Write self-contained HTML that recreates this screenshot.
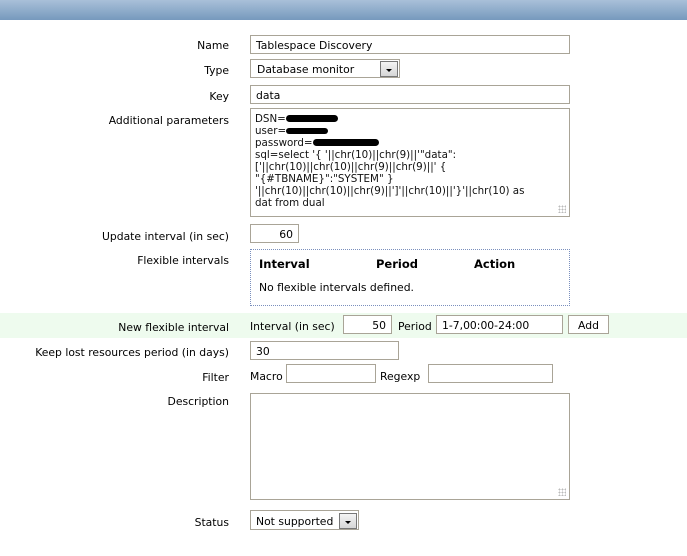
<!DOCTYPE html>
<html><head><meta charset="utf-8"><style>
*{margin:0;padding:0;box-sizing:border-box}
body{width:687px;height:556px;background:#fff;position:relative;overflow:hidden;font-family:"DejaVu Sans","Liberation Sans",sans-serif;font-size:10.8px;color:#000}
.a{position:absolute;white-space:nowrap}
.l{position:absolute;right:458px;white-space:nowrap}
.in{position:absolute;border:1px solid #a9a497;background:#fff;padding:3px 5px 0;height:19px;line-height:13px;white-space:nowrap;overflow:hidden}
.dd{position:absolute;width:18px;height:16px;border:1px solid #777;background:linear-gradient(#f4f4f4,#d6d6d6)}
.dd:after{content:"";position:absolute;left:5px;top:7px;border-left:3px solid transparent;border-right:3px solid transparent;border-top:3px solid #000}
.grip{position:absolute;right:3px;bottom:3px;width:8px;height:8px;background:radial-gradient(circle,#bbb 0.8px,transparent 1px) 0 0/3px 3px}
</style></head><body>
<div class="a" style="left:0;top:0;width:687px;height:20px;background:linear-gradient(#a9c0d9,#7699bd)"></div>

<div class="l" style="top:39px">Name</div>
<div class="in" style="left:250px;top:35px;width:320px">Tablespace Discovery</div>

<div class="l" style="top:64px">Type</div>
<div class="in" style="left:250px;top:59px;width:150px;padding-left:6px">Database monitor</div>
<div class="dd" style="left:380px;top:61px"></div>

<div class="l" style="top:90px">Key</div>
<div class="in" style="left:250px;top:85px;width:320px">data</div>

<div class="l" style="top:114px">Additional parameters</div>
<div class="in" style="left:250px;top:108px;width:320px;height:109px;white-space:normal;line-height:12px;padding:4px 4px;font-size:10.3px;color:#111">DSN=<span style="display:inline-block;width:52px;height:7px;background:#000;border-radius:4px"></span><br>user=<span style="display:inline-block;width:42px;height:6px;background:#000;border-radius:4px"></span><br>password=<span style="display:inline-block;width:66px;height:7px;background:#000;border-radius:4px"></span><br>sql=select '{ '||chr(10)||chr(9)||'"data":<br>['||chr(10)||chr(10)||chr(9)||chr(9)||' {<br>"{#TBNAME}":"SYSTEM" }<br>'||chr(10)||chr(10)||chr(9)||']'||chr(10)||'}'||chr(10) as<br>dat from dual<div class="grip"></div></div>

<div class="l" style="top:230px">Update interval (in sec)</div>
<div class="in" style="left:250px;top:224px;width:49px;text-align:right">60</div>

<div class="l" style="top:254px">Flexible intervals</div>
<div class="a" style="left:250px;top:249px;width:320px;height:57px;border:1px dotted #7a8fbd"></div>
<div class="a" style="left:259px;top:257px;font-weight:bold;font-size:11.5px">Interval</div>
<div class="a" style="left:376px;top:257px;font-weight:bold;font-size:11.5px">Period</div>
<div class="a" style="left:474px;top:257px;font-weight:bold;font-size:11.5px">Action</div>
<div class="a" style="left:259px;top:281px">No flexible intervals defined.</div>

<div class="a" style="left:0;top:313px;width:687px;height:25px;background:#eefbee"></div>
<div class="l" style="top:321px">New flexible interval</div>
<div class="a" style="left:250px;top:320px">Interval (in sec)</div>
<div class="in" style="left:343px;top:315px;width:49px;text-align:right">50</div>
<div class="a" style="left:398px;top:320px">Period</div>
<div class="in" style="left:436px;top:315px;width:127px">1-7,00:00-24:00</div>
<div class="in" style="left:568px;top:315px;width:41px;text-align:center;padding:3px 0 0">Add</div>

<div class="l" style="top:346px">Keep lost resources period (in days)</div>
<div class="in" style="left:250px;top:341px;width:149px">30</div>

<div class="l" style="top:371px">Filter</div>
<div class="a" style="left:250px;top:370px">Macro</div>
<div class="in" style="left:286px;top:364px;width:90px"></div>
<div class="a" style="left:380px;top:370px">Regexp</div>
<div class="in" style="left:428px;top:364px;width:125px"></div>

<div class="l" style="top:395px">Description</div>
<div class="in" style="left:250px;top:393px;width:320px;height:107px"><div class="grip"></div></div>

<div class="l" style="top:516px">Status</div>
<div class="in" style="left:250px;top:510px;width:109px;height:20px;padding-top:4px">Not supported</div>
<div class="dd" style="left:339px;top:513px"></div>
</body></html>
